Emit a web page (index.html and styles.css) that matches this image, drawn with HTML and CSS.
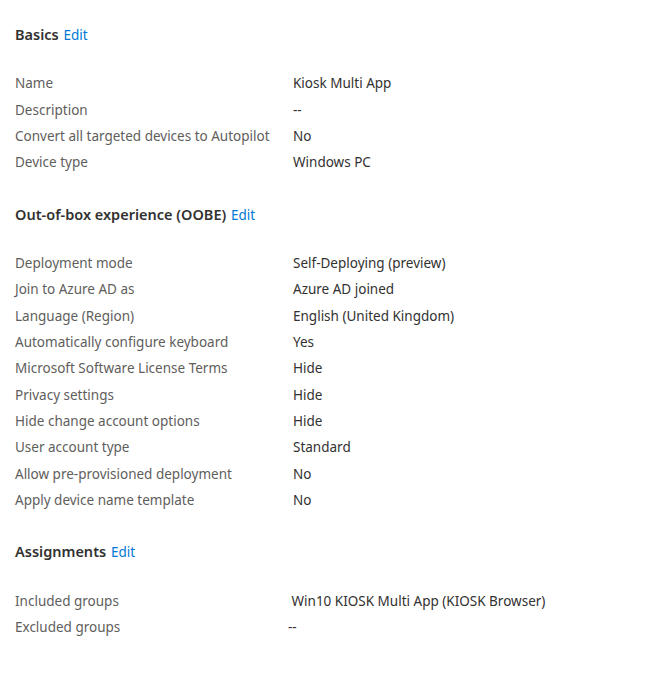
FILE: index.html
```html
<!DOCTYPE html>
<html>
<head>
<meta charset="utf-8">
<link rel="stylesheet" href="styles.css">
</head>
<body>
<div class="page">
  <section class="section">
    <h2 class="section-title">Basics <a class="edit" href="#">Edit</a></h2>
    <div class="rows">
      <div class="label">Name</div><div class="value">Kiosk Multi App</div>
      <div class="label">Description</div><div class="value">--</div>
      <div class="label">Convert all targeted devices to Autopilot</div><div class="value">No</div>
      <div class="label">Device type</div><div class="value">Windows PC</div>
    </div>
  </section>
  <section class="section">
    <h2 class="section-title">Out-of-box experience (OOBE) <a class="edit" href="#">Edit</a></h2>
    <div class="rows">
      <div class="label">Deployment mode</div><div class="value">Self-Deploying (preview)</div>
      <div class="label">Join to Azure AD as</div><div class="value">Azure AD joined</div>
      <div class="label">Language (Region)</div><div class="value">English (United Kingdom)</div>
      <div class="label">Automatically configure keyboard</div><div class="value">Yes</div>
      <div class="label">Microsoft Software License Terms</div><div class="value">Hide</div>
      <div class="label">Privacy settings</div><div class="value">Hide</div>
      <div class="label">Hide change account options</div><div class="value">Hide</div>
      <div class="label">User account type</div><div class="value">Standard</div>
      <div class="label">Allow pre-provisioned deployment</div><div class="value">No</div>
      <div class="label">Apply device name template</div><div class="value">No</div>
    </div>
  </section>
  <section class="section">
    <h2 class="section-title">Assignments <a class="edit" href="#">Edit</a></h2>
    <div class="rows rows-assign">
      <div class="label">Included groups</div><div class="value">&nbsp;Win10 KIOSK Multi App (KIOSK Browser)</div>
      <div class="label">Excluded groups</div><div class="value">--</div>
    </div>
  </section>
</div>
</body>
</html>
```
FILE: styles.css
```css
html, body {
  margin: 0;
  padding: 0;
  background: #ffffff;
}
body {
  font-family: "Noto Sans", "Open Sans", sans-serif;
  font-size: 13.5px;
  color: #323130;
}
.page {
  padding: 25px 15px 0 15px;
}
.section {
  margin-bottom: 29px;
}
.section-title {
  margin: 0 0 25px 0;
  font-size: 14.5px;
  font-weight: 600;
  line-height: 19px;
  height: 20px;
  color: #323130;
}
.edit {
  font-weight: 400;
  font-size: 13.5px;
  color: #0078d4;
  text-decoration: none;
  margin-left: 1px;
}
.rows {
  display: grid;
  grid-template-columns: 278px 1fr;
  grid-auto-rows: 26.4px;
  align-items: center;
}
.rows-assign {
  grid-template-columns: 273px 1fr;
}
.label {
  color: #605e5c;
  white-space: nowrap;
  line-height: 18px;
}
.value {
  color: #323130;
  white-space: nowrap;
  line-height: 18px;
}
```
